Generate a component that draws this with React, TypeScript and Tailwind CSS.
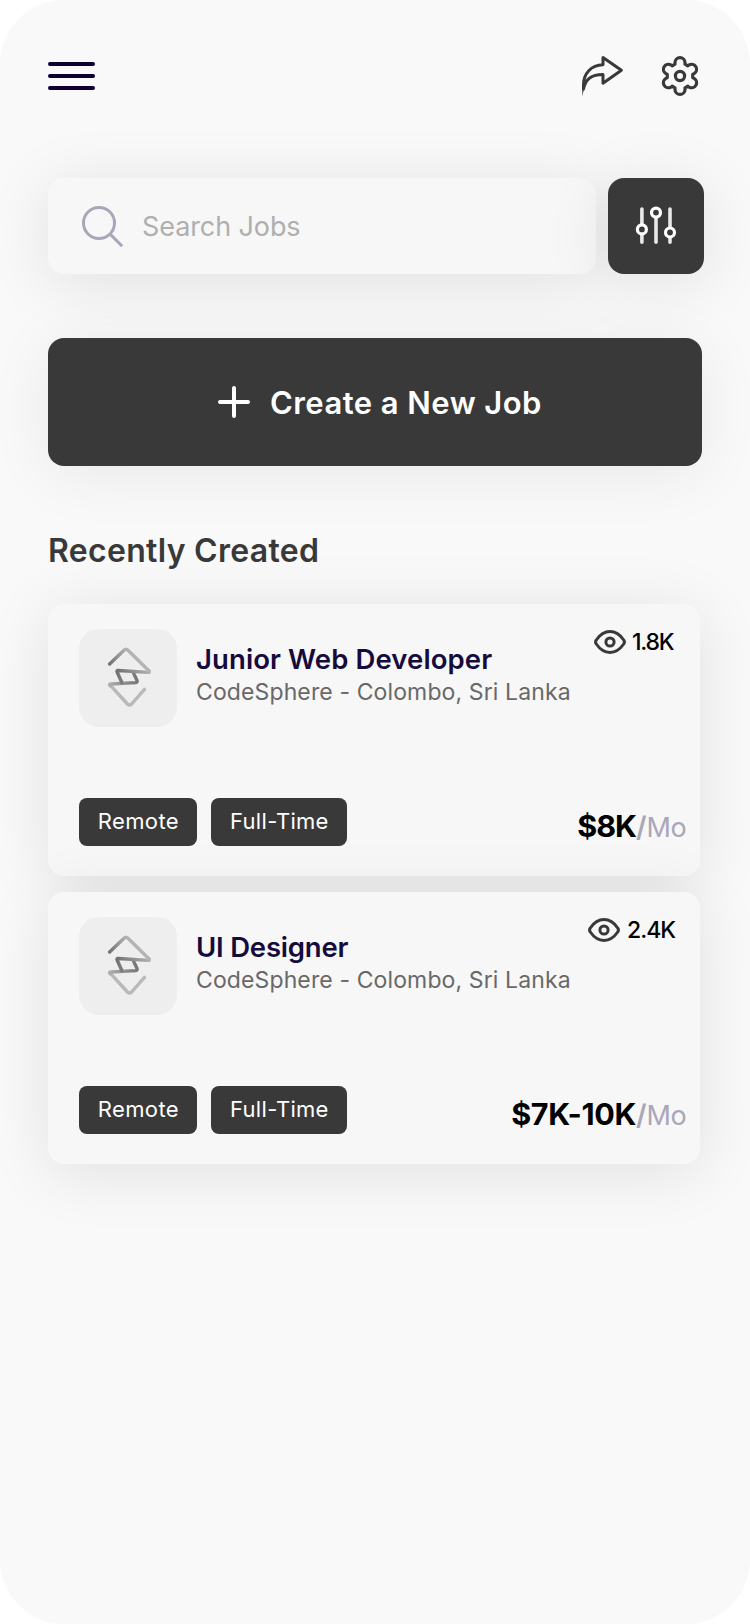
import React from "react";

const SHADOW = "shadow-[0_8px_64px_rgba(0,0,0,0.1)]";
const SOFT_SHADOW = "shadow-[0_8px_64px_rgba(0,0,0,0.07)]";

function gearPath(): string {
  const point = (x: number, y: number, turn: number) => {
    const a = (turn * Math.PI) / 3;
    const px = x * Math.cos(a) - y * Math.sin(a);
    const py = x * Math.sin(a) + y * Math.cos(a);
    return `${px.toFixed(2)} ${py.toFixed(2)}`;
  };
  let d = "";
  for (let k = 0; k < 6; k++) {
    d += `${k === 0 ? "M" : "L"}${point(-5, -11.8, k)}L${point(-5, -13.4, k)}A5 5 0 0 1 ${point(5, -13.4, k)}L${point(5, -11.8, k)}`;
  }
  return d + "Z";
}

function GearIcon() {
  return (
    <svg width="42" height="42" viewBox="-21 -21 42 42" fill="none" stroke="#393939" strokeWidth="3.2" strokeLinejoin="round">
      <path d={gearPath()} />
      <circle r="4.6" />
    </svg>
  );
}

function ShareIcon() {
  return (
    <svg width="42" height="42" viewBox="0 0 42 42" fill="none">
      <path
        d="M21 2.4 39.4 15.2 21 28.2V19.4C11 19.4 3.2 23.2 1.5 34V30C1.5 18.6 9 10 21 9.8Z"
        stroke="#393939"
        strokeWidth="3"
        strokeLinejoin="round"
      />
      <path d="M0 30 .4 41.4C1.2 36 2.4 32.5 4.8 28.5Z" fill="#393939" />
    </svg>
  );
}

function SearchIcon() {
  return (
    <svg width="42" height="42" viewBox="0 0 42 42" fill="none" stroke="#aaa6b9" strokeWidth="3">
      <circle cx="17" cy="17" r="15.5" />
      <path d="M28.4 28.4 40.2 40.2" />
    </svg>
  );
}

function SlidersIcon() {
  return (
    <svg width="42" height="40" viewBox="0 0 42 40" fill="none" strokeLinecap="round">
      <path d="M6.9 3V36.2M21 3V36.2M35 3V36.2" stroke="#e9e9e9" strokeWidth="3.6" />
      <g fill="#393939" stroke="#fff" strokeWidth="3.2">
        <circle cx="6.9" cy="23.4" r="4.5" />
        <circle cx="21" cy="6.6" r="4.5" />
        <circle cx="35" cy="26.5" r="4.5" />
      </g>
    </svg>
  );
}

function EyeIcon() {
  return (
    <svg width="32" height="24" viewBox="0 0 32 24" fill="none" stroke="#393939" strokeWidth="3">
      <path d="M2.3 14Q.8 12 2.3 10C5.6 5.2 10 1.6 16 1.6S26.4 5.2 29.7 10Q31.2 12 29.7 14C26.4 18.8 22 22.4 16 22.4S5.6 18.8 2.3 14Z" />
      <circle cx="16" cy="12" r="4.1" />
    </svg>
  );
}

function CompanyLogo({ id }: { id: string }) {
  return (
    <svg width="98" height="98" viewBox="0 0 98 98" fill="none" strokeWidth="3.4" strokeLinecap="round" strokeLinejoin="round">
      <defs>
        <linearGradient id={`${id}-a`} gradientUnits="userSpaceOnUse" x1="30" y1="34" x2="48" y2="20">
          <stop stopColor="#747474" />
          <stop offset="1" stopColor="#b4b4b4" />
        </linearGradient>
        <linearGradient id={`${id}-b`} gradientUnits="userSpaceOnUse" x1="37" y1="42" x2="71" y2="44">
          <stop stopColor="#707070" />
          <stop offset="1" stopColor="#b0b0b0" />
        </linearGradient>
        <linearGradient id={`${id}-c`} gradientUnits="userSpaceOnUse" x1="59" y1="53" x2="30" y2="56">
          <stop stopColor="#747474" />
          <stop offset="1" stopColor="#b0b0b0" />
        </linearGradient>
      </defs>
      <path d="M31 55.8 48.4 75Q50.5 77 52.6 75L65.5 60.3" stroke="#b9b9b9" />
      <path d="M54.2 43.6 58 51.6Q58.6 53.4 56.8 53.6L32 55Q29.6 55 31 56.6" stroke={`url(#${id}-c)`} />
      <path d="M43 53.8 38.2 43.2Q37.4 41.4 39.2 41.5L69 43.4Q71.4 43.4 69.8 41.6" stroke={`url(#${id}-b)`} />
      <path d="M30.6 35 45 21.2Q47 19.2 49 21.2L69.8 41.8" stroke={`url(#${id}-a)`} />
    </svg>
  );
}

function Tag({ className, children }: { className: string; children: React.ReactNode }) {
  return (
    <span className={`flex h-12 items-center justify-center rounded-lg bg-[#393939] pb-[2px] text-[22px] leading-none text-white ${className}`}>
      {children}
    </span>
  );
}

type Job = {
  id: string;
  title: string;
  titleClass: string;
  views: string;
  viewsGap: string;
  viewsClass: string;
  pay: string;
  payClass: string;
};

const jobs: Job[] = [
  {
    id: "junior",
    title: "Junior Web Developer",
    titleClass: "tracking-[0.1px]",
    views: "1.8K",
    viewsGap: "gap-[6px]",
    viewsClass: "w-[42px] tracking-[-1.2px]",
    pay: "$8K",
    payClass: "tracking-[-1px]",
  },
  {
    id: "designer",
    title: "UI Designer",
    titleClass: "tracking-[-0.2px]",
    views: "2.4K",
    viewsGap: "gap-[7px]",
    viewsClass: "w-[47px] tracking-[-1px]",
    pay: "$7K-10K",
    payClass: "tracking-[-0.35px]",
  },
];

function JobCard({ job }: { job: Job }) {
  return (
    <article className={`flex h-[272px] w-[652px] flex-col justify-between rounded-2xl bg-[#f7f7f7] pt-[25px] pr-[14px] pb-[30px] pl-[31.4px] ${SHADOW}`}>
      <div className="flex">
        <div className="h-[98px] w-[98px] shrink-0 rounded-[20px] bg-[#eeeeee]">
          <CompanyLogo id={job.id} />
        </div>
        <div className="w-0 grow whitespace-nowrap pt-[14px] pl-[18.6px]">
          <h3 className={`text-[27.5px] leading-[32px] font-semibold text-[#150b3d] ${job.titleClass}`}>{job.title}</h3>
          <p className="mt-[2px] text-[23px] leading-[30px] tracking-[0.12px] text-[#686868]">CodeSphere - Colombo, Sri Lanka</p>
        </div>
        <div className={`mr-[12px] flex h-6 items-center pt-[2px] ${job.viewsGap}`}>
          <EyeIcon />
          <span className={`whitespace-nowrap text-[23px] leading-6 font-medium text-black ${job.viewsClass}`}>{job.views}</span>
        </div>
      </div>
      <div className="flex items-end justify-between">
        <div className="flex gap-[14px]">
          <Tag className="w-[118px] tracking-[0.35px]">Remote</Tag>
          <Tag className="w-[136px] tracking-[0.3px]">Full-Time</Tag>
        </div>
        <p className="-mb-px flex items-baseline leading-[38px]">
          <span className={`text-[30.5px] font-bold text-black ${job.payClass}`}>{job.pay}</span>
          <span className="text-[28px] font-semibold text-[#aaa6b9]">/</span>
          <span className="text-[27px] tracking-[-0.6px] text-[#aaa6b9]">Mo</span>
        </p>
      </div>
    </article>
  );
}

export default function App() {
  return (
    <div className="min-h-[1624px] w-[750px] bg-white font-['Inter','Liberation_Sans',sans-serif]">
      <main className="flex min-h-[1624px] flex-col overflow-hidden rounded-[64px] bg-[#f9f9f9] px-12">
        <header className="flex items-center justify-between pt-[55px]">
          <button aria-label="Menu" className="flex w-[47px] flex-col gap-2">
            <span className="h-1 rounded-full bg-[#0d0030]" />
            <span className="h-1 rounded-full bg-[#0d0030]" />
            <span className="h-1 rounded-full bg-[#0d0030]" />
          </button>
          <div className="flex gap-[35px] pr-px">
            <button aria-label="Share">
              <ShareIcon />
            </button>
            <button aria-label="Settings">
              <GearIcon />
            </button>
          </div>
        </header>

        <div className="mt-[81px] flex gap-3">
          <div className={`flex h-24 w-[548px] shrink-0 items-center gap-[18px] rounded-2xl bg-[#f7f7f7] pt-[2px] pl-[34px] ${SHADOW}`}>
            <SearchIcon />
            <span className="text-[27px] leading-8 tracking-[-0.1px] text-[#afafaf]">Search Jobs</span>
          </div>
          <button aria-label="Filter" className={`flex h-24 w-24 shrink-0 items-center justify-center rounded-2xl bg-[#393939] ${SHADOW}`}>
            <SlidersIcon />
          </button>
        </div>

        <button className={`mt-16 flex h-32 w-[654px] items-center rounded-2xl bg-[#393939] pl-[170px] text-white ${SOFT_SHADOW}`}>
          <svg width="32" height="32" viewBox="0 0 32 32" stroke="#fff" strokeWidth="4" strokeLinecap="round">
            <path d="M2 16H30M16 2V30" />
          </svg>
          <span className="pt-[2px] pl-[20px] text-[31px] leading-9 font-semibold tracking-[0.45px]">Create a New Job</span>
        </button>

        <h2 className="mt-[65px] text-[32px] leading-10 font-semibold tracking-[0.3px] text-[#393939]">Recently Created</h2>

        <section className="mt-[33px] flex flex-col gap-4">
          {jobs.map((job) => (
            <JobCard key={job.id} job={job} />
          ))}
        </section>
      </main>
    </div>
  );
}
